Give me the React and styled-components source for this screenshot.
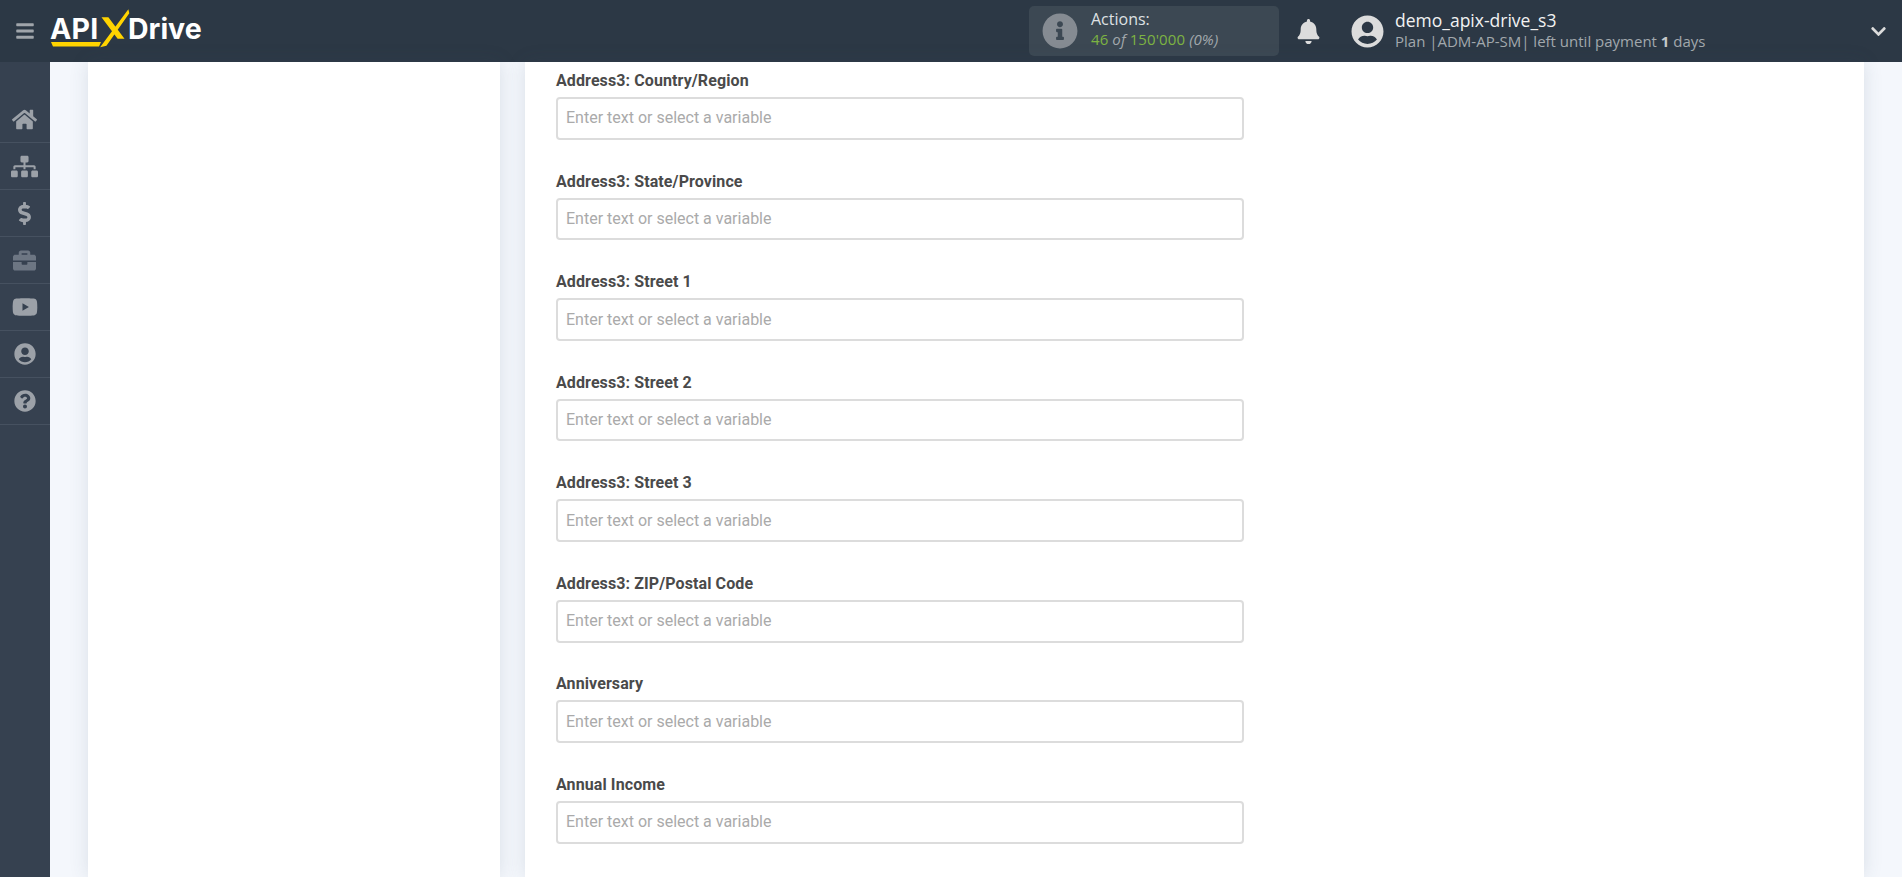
import React from 'react';
import styled, { createGlobalStyle } from 'styled-components';
import {
  FaBars, FaBell, FaBriefcase, FaChevronDown, FaDollarSign, FaHome, FaInfoCircle,
  FaQuestionCircle, FaSitemap, FaUserCircle, FaYoutube,
} from 'react-icons/fa';

const Global = createGlobalStyle`
  html, body { margin: 0; padding: 0; height: 100%; overflow: hidden; background: #f4f7fc; }
  * { box-sizing: border-box; }
`;

const Page = styled.div`
  width: 1902px;
  height: 877px;
  display: flex;
  flex-direction: column;
  overflow: hidden;
`;

const Header = styled.header`
  height: 62px;
  flex: none;
  display: flex;
  align-items: center;
  background: #2c3845;
  font-family: "Open Sans", sans-serif;
`;

const Burger = styled.div`
  width: 50px;
  flex: none;
  display: flex;
  justify-content: center;
  color: #a0a5ab;
  font-size: 20px;
  line-height: 0;
`;

const Logo = styled.div`
  width: 979px;
  flex: none;
  height: 62px;
  position: relative;
`;

const LogoWord = styled.span`
  position: absolute;
  top: 12px;
  left: ${p => p.$left}px;
  font-family: "Inter", sans-serif;
  font-weight: 700;
  font-size: 28.5px;
  line-height: 34px;
  letter-spacing: ${p => p.$spacing}px;
  color: #fff;
`;

const LogoMark = styled.svg`
  position: absolute;
  left: 0;
  top: 0;
`;

const Actions = styled.div`
  width: 250px;
  height: 50px;
  flex: none;
  display: flex;
  align-items: center;
  gap: 13px;
  padding-left: 13px;
  background: #3c4853;
  border-radius: 5px;
`;

const InfoIcon = styled.div`
  color: #858b92;
  font-size: 36px;
  line-height: 0;
`;

const ActionText = styled.div`
  display: flex;
  flex-direction: column;
  margin-top: -4px;
`;

const ActionTitle = styled.div`
  font-size: 16px;
  line-height: 20px;
  color: #dfe1e3;
`;

const ActionCount = styled.div`
  font-size: 15px;
  line-height: 21px;
  letter-spacing: 0.1px;
  color: #a2a8ad;
  font-style: italic;
`;

const Green = styled.span`
  color: #7cb342;
  font-style: normal;
`;

const Bell = styled.div`
  width: 59px;
  flex: none;
  display: flex;
  justify-content: center;
  color: #dcdcdc;
  font-size: 25px;
  line-height: 0;
`;

const Avatar = styled.div`
  flex: none;
  margin-left: 13px;
  color: #dcdcdc;
  font-size: 33px;
  line-height: 0;
`;

const UserText = styled.div`
  flex: 1;
  margin-left: 11px;
  display: flex;
  flex-direction: column;
`;

const UserName = styled.div`
  font-size: 17.5px;
  line-height: 20px;
  color: #f2f2f2;
`;

const UserPlan = styled.div`
  font-size: 15px;
  line-height: 21px;
  padding-top: 1px;
  color: #a2a8ad;
  b { color: #c5c8cb; }
`;

const Chevron = styled.div`
  width: 32px;
  flex: none;
  color: #dcdcdc;
  font-size: 17px;
  line-height: 0;
`;

const Body = styled.div`
  flex: 1;
  display: flex;
  min-height: 0;
`;

const Sidebar = styled.nav`
  width: 50px;
  flex: none;
  padding-top: 34px;
  background: #364150;
`;

const NavItem = styled.div`
  height: 47px;
  display: flex;
  align-items: center;
  justify-content: center;
  padding-right: 1px;
  border-bottom: 1px solid #465160;
  color: ${p => (p.$dim ? '#6d7683' : '#9ca1a8')};
  font-size: ${p => p.$size}px;
`;

const Content = styled.main`
  flex: 1;
  display: flex;
  gap: 25px;
  padding: 0 38px;
  min-width: 0;
`;

const Panel = styled.section`
  background: #fff;
  box-shadow: 0 0 18px rgba(60, 75, 100, 0.14);
  width: ${p => p.$width || 'auto'};
  flex: ${p => (p.$grow ? 1 : 'none')};
`;

const Form = styled.div`
  padding: 9px 0 0 31px;
`;

const Field = styled.div`
  height: 100.57px;
  width: 687.5px;
`;

const Label = styled.label`
  display: block;
  height: 26px;
  padding-top: 1px;
  font-family: "Roboto", sans-serif;
  font-weight: 700;
  font-size: 16px;
  line-height: 18px;
  letter-spacing: 0.1px;
  color: #4a4a4a;
`;

const Input = styled.input`
  display: block;
  width: 100%;
  height: 42.8px;
  padding: 0 8px 1px;
  border: 2px solid #dcdcdc;
  border-radius: 4px;
  background: #fff;
  outline: none;
  font-family: "Roboto", sans-serif;
  font-size: 16px;
  color: #444;
  &::placeholder { color: #aaa; opacity: 1; }
`;

const navItems = [
  { Icon: FaHome, size: 25 },
  { Icon: FaSitemap, size: 27 },
  { Icon: FaDollarSign, size: 23 },
  { Icon: FaBriefcase, size: 23, dim: true },
  { Icon: FaYoutube, size: 26 },
  { Icon: FaUserCircle, size: 22 },
  { Icon: FaQuestionCircle, size: 22 },
];

const fields = [
  'Address3: Country/Region',
  'Address3: State/Province',
  'Address3: Street 1',
  'Address3: Street 2',
  'Address3: Street 3',
  'Address3: ZIP/Postal Code',
  'Anniversary',
  'Annual Income',
];

export default function App() {
  return (
    <Page>
      <Global />
      <Header>
        <Burger><FaBars /></Burger>
        <Logo>
          <LogoWord $left={0} $spacing={0.3}>API</LogoWord>
          <LogoWord $left={78} $spacing={0}>Drive</LogoWord>
          <LogoMark width="130" height="62" viewBox="0 0 130 62">
            <path d="M1 42 L51 42 L49 46.5 L3 46.5 Z" fill="#ffd400" />
            <path d="M52 46 L78 11 L78.5 13 L56 45 Z M53 18 L58 18 L73 38 L68 38 Z" fill="#ffd400" stroke="#ffd400" strokeWidth="1.5" />
          </LogoMark>
        </Logo>
        <Actions>
          <InfoIcon><FaInfoCircle /></InfoIcon>
          <ActionText>
            <ActionTitle>Actions:</ActionTitle>
            <ActionCount><Green>46</Green> of <Green>150'000</Green> (0%)</ActionCount>
          </ActionText>
        </Actions>
        <Bell><FaBell /></Bell>
        <Avatar><FaUserCircle /></Avatar>
        <UserText>
          <UserName>demo_apix-drive_s3</UserName>
          <UserPlan>Plan |ADM-AP-SM| left until payment <b>1</b> days</UserPlan>
        </UserText>
        <Chevron><FaChevronDown /></Chevron>
      </Header>
      <Body>
        <Sidebar>
          {navItems.map(({ Icon, size, dim }, i) => (
            <NavItem key={i} $size={size} $dim={dim}><Icon /></NavItem>
          ))}
        </Sidebar>
        <Content>
          <Panel $width="412px" />
          <Panel $grow>
            <Form>
              {fields.map(name => (
                <Field key={name}>
                  <Label>{name}</Label>
                  <Input placeholder="Enter text or select a variable" />
                </Field>
              ))}
            </Form>
          </Panel>
        </Content>
      </Body>
    </Page>
  );
}
